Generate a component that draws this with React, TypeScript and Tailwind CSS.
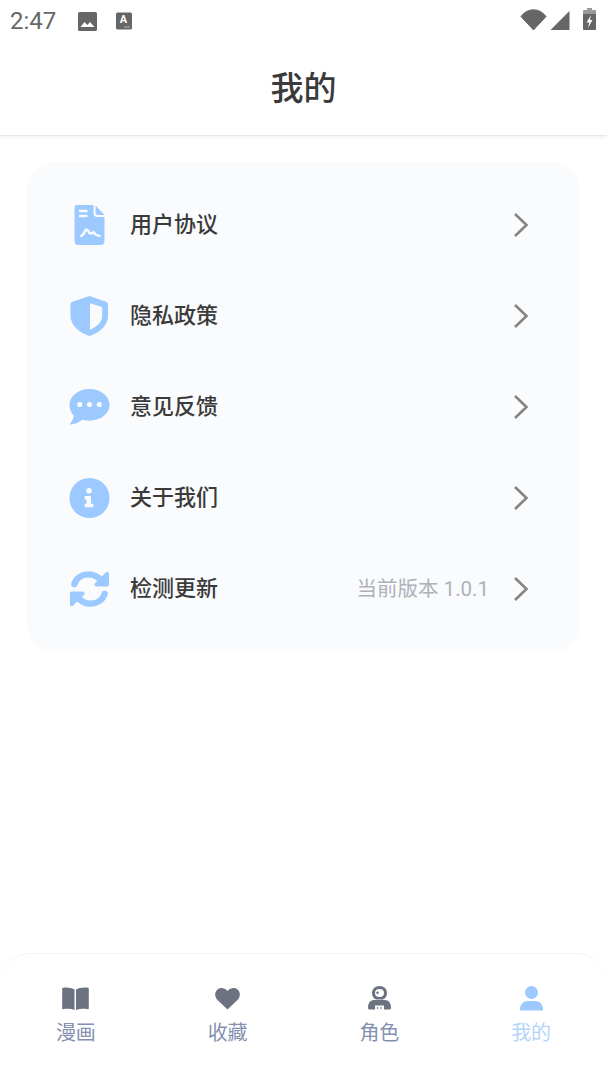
import type { ReactNode } from 'react'

const fontStack = { fontFamily: 'Roboto, "Noto Sans CJK SC", sans-serif' }

function Chevron() {
  return (
    <svg width="16" height="26" viewBox="0 0 16 26" className="shrink-0">
      <path d="M2 2 13.500 13 2 24" fill="none" stroke="#858585" strokeWidth="2.600" />
    </svg>
  )
}

function DocIcon() {
  return (
    <svg width="32" height="42" viewBox=".5 0 32 42">
      <path d="M3.500 1H20v8q0 4 4 4h7v24q0 4-4 4H4.500q-3.500 0-3.500-4V4q0-3 2.500-3Z" fill="#9cc9ff" />
      <path d="M22 1.500 31 11h-6q-3 0-3-3Z" fill="#9cc9ff" />
      <path d="M6.500 7h6.500M6.500 12h6.500" stroke="#f9fbfd" strokeWidth="2.400" strokeLinecap="round" />
      <path d="M7.500 32Q10 31 12 26q2-1 4 3 2 1.500 4-1 2 3.500 6 4" fill="none" stroke="#f9fbfd" strokeWidth="2.400" strokeLinecap="round" strokeLinejoin="round" />
    </svg>
  )
}

function ShieldIcon() {
  return (
    <svg width="42" height="42" viewBox="0 0 42 42">
      <path d="M21 .5 38 6.500c1 .4 2 1.500 2 3V21c0 9-8 17-19 20.500C10 38 1.500 30 1.500 21V9.500c0-1.500 1-2.600 2-3Z" fill="#9cc9ff" />
      <path d="M21.500 8 33 11.500c.6.200 1 .7 1 1.500v8c0 6-5 11-12.500 14Z" fill="#f9fbfd" />
    </svg>
  )
}

function ChatIcon() {
  return (
    <svg width="42" height="38" viewBox="0 0 42 38">
      <path d="M21 .5c11.500 0 20.500 7.300 20.500 16.300S32.500 33 21 33c-2.500 0-5-.4-7.300-1C10 34.500 6 36.500 2 37c-.8 0-1-.8-.6-1.300 1.500-1.700 3-4.700 3.600-7.700C2 25 .5 21 .5 16.800.5 7.800 9.500 .5 21 .5Z" fill="#9cc9ff" />
      <circle cx="11" cy="16.500" r="2.600" fill="#f9fbfd" />
      <circle cx="21" cy="16.500" r="2.600" fill="#f9fbfd" />
      <circle cx="31" cy="16.500" r="2.600" fill="#f9fbfd" />
    </svg>
  )
}

function InfoIcon() {
  return (
    <svg width="42" height="42" viewBox="0 0 42 42">
      <circle cx="21" cy="21" r="20.500" fill="#9cc9ff" />
      <circle cx="20.500" cy="13.500" r="2.800" fill="#f9fbfd" />
      <path d="M16 19h6.500v8H25v3.500h-9V27h2v-4.500h-2Z" fill="#f9fbfd" />
    </svg>
  )
}

function RefreshIcon() {
  return (
    <svg width="42" height="40" viewBox="0 0 42 40" fill="none">
      <path d="M5.500 15C7.500 8.500 13.500 5 20 5c5.500 0 10 2.500 14 7" stroke="#9cc9ff" strokeWidth="6.500" strokeLinecap="round" />
      <path d="M36.500 25c-2 6.500-8 10-14.500 10-5.500 0-10-2.500-14-7" stroke="#9cc9ff" strokeWidth="6.500" strokeLinecap="round" />
      <path d="M39 4.500v11H28Z" fill="#9cc9ff" stroke="#9cc9ff" strokeWidth="4" strokeLinejoin="round" />
      <path d="M3 35.500v-11H14Z" fill="#9cc9ff" stroke="#9cc9ff" strokeWidth="4" strokeLinejoin="round" />
    </svg>
  )
}

function BookIcon() {
  return (
    <svg width="29" height="23" viewBox="0 0 29 23" fill="#6d7280">
      <path d="M13.500 2.500C11 .8 6 0 2 .8c-.7.200-.8 .5-.8 1.200v19.500c0 .6.500 1 1 .8 4-.8 7.800-.5 11.300 .7Z" />
      <path d="M15 2.500C17.500 .8 23 0 27 .8c.6.200.8 .5 .8 1.200v19.500c0 .6-.5 1-1 .8-4-.8-8.300-.5-11.800 .7Z" />
    </svg>
  )
}

function HeartIcon() {
  return (
    <svg width="25" height="22" viewBox="0 0 25 22" fill="#6d7280">
      <path d="M12.500 21.500 2.500 12C-.5 9-.5 4.500 2 2c2.800-2.700 7-2.600 10.500 1C16 -.6 20.200 -.7 23 2c2.500 2.500 2.500 7-.5 10Z" />
    </svg>
  )
}

function RobotIcon() {
  return (
    <svg width="23" height="25" viewBox="0 0 23 25">
      <path d="M11.500 0C16 0 19 3 19 7c0 3-1.500 5.500-4 6.500H8C5.500 12.500 4 10 4 7c0-4 3-7 7.500-7Z" fill="#6d7280" />
      <path d="M11.500 3C14.500 3 16 4.500 16 7s-1.500 4-4.500 4S7 9.500 7 7s1.500-4 4.500-4Z" fill="#fff" />
      <path d="M8 6.800h3M9.500 5.300v3" stroke="#6d7280" strokeWidth="1" />
      <path d="M6 14h11c3.500 0 6 3 6 7.500 0 1-.5 2-1.500 2H16v-4H7v4H1.500C.5 23.500 0 22.500 0 21.500 0 17 2.500 14 6 14Z" fill="#6d7280" />
      <path d="M9.500 21v2M13 21v2" stroke="#6d7280" strokeWidth="1" />
    </svg>
  )
}

function UserIcon() {
  return (
    <svg width="23" height="25" viewBox="0 0 23 25" fill="#9cc9ff">
      <circle cx="11.500" cy="6.500" r="6.500" />
      <path d="M8 15h7c4.500 0 8 3.500 8 8 0 1-.5 1.500-1.500 1.500h-20C.5 24.500 0 24 0 23c0-4.500 3.500-8 8-8Z" />
    </svg>
  )
}

function StatusBar() {
  return (
    <div className="h-[42px] pl-[10px] pr-[11px] flex items-center text-[#666666]">
      <span className="text-[24px] leading-none" style={{ fontFamily: 'Roboto, sans-serif' }}>2:47</span>
      <svg width="19" height="19" viewBox="0 0 19 19" className="ml-[22px]">
        <rect width="19" height="19" rx="1.500" fill="#666666" />
        <path d="M2.500 15 6.500 10l3 3 2.500-3 4.500 5Z" fill="#fff" />
      </svg>
      <svg width="16" height="18" viewBox="0 0 16 18" className="ml-[19px]">
        <rect width="16" height="17" y=".5" rx="1.500" fill="#666666" />
        <text x="7.500" y="11" textAnchor="middle" fontSize="11" fontWeight="700" fill="#fff" fontFamily="Roboto, sans-serif">A</text>
        <path d="M8.500 15h5" stroke="#fff" strokeWidth="1" strokeDasharray="1 1" />
      </svg>
      <svg width="27" height="24" viewBox="0 0 27 24" className="ml-auto">
        <path d="M13.500 21 1 7.500C4.500 3 8.500 .8 13.500 .8s9 2.200 12.500 6.700Z" fill="#666666" stroke="#666666" strokeLinejoin="round" />
      </svg>
      <svg width="20" height="22" viewBox="0 0 20 22" className="ml-[3px]">
        <path d="M19.500 1v19H.5Z" fill="#666666" />
      </svg>
      <svg width="13" height="22" viewBox="0 0 13 22" className="ml-[13px] mb-[4px]">
        <path d="M4 0h5v2h3c.5 0 1 .5 1 1v3H0V3c0-.5.5-1 1-1h3Z" fill="#9a9a9a" />
        <path d="M0 6h13v15c0 .5-.5 1-1 1H1c-.5 0-1-.5-1-1Z" fill="#666666" />
        <path d="M8 7 3.500 14.500h2.800L5 20l4.500-8H6.800Z" fill="#fff" />
      </svg>
    </div>
  )
}

function MenuRow({ icon, label, extra }: { icon: ReactNode; label: string; extra?: string }) {
  return (
    <div className="h-[91.2px] flex items-center pl-[42px] pr-[51px]">
      <div className="w-[41px] flex justify-center shrink-0">{icon}</div>
      <span className="ml-[20px] text-[22px] leading-none font-medium text-[#3a3a3a]">{label}</span>
      {extra && <span className="ml-auto mr-[24px] text-[20.5px] leading-none text-[#aeb2b8]">{extra}</span>}
      <div className={extra ? '' : 'ml-auto'}><Chevron /></div>
    </div>
  )
}

function TabItem({ icon, label, active }: { icon: ReactNode; label: string; active?: boolean }) {
  return (
    <div className="flex-1 flex flex-col items-center">
      <div className="h-[25px] flex items-center justify-center">{icon}</div>
      <span className={`mt-[12px] text-[20px] leading-none ${active ? 'text-[#b3d5fb]' : 'text-[#8490b0]'}`}>{label}</span>
    </div>
  )
}

export default function App() {
  return (
    <div className="w-[607px] h-[1080px] bg-white flex flex-col overflow-hidden" style={fontStack}>
      <header className="h-[136px] border-b border-[#e4e6ea] shadow-[0_2px_3px_rgba(30,40,70,0.05)]">
        <StatusBar />
        <h1 className="mt-[25px] text-center text-[33px] leading-[44px] font-medium text-[#3a3a3a]">我的</h1>
      </header>

      <main className="flex-1 px-[27px] pt-[26px]">
        <div className="rounded-[28px] bg-[#f9fbfd] py-[17px]">
          <MenuRow icon={<DocIcon />} label="用户协议" />
          <MenuRow icon={<ShieldIcon />} label="隐私政策" />
          <MenuRow icon={<ChatIcon />} label="意见反馈" />
          <MenuRow icon={<InfoIcon />} label="关于我们" />
          <MenuRow icon={<RefreshIcon />} label="检测更新" extra="当前版本 1.0.1" />
        </div>
      </main>

      <nav className="h-[127px] rounded-t-[30px] border-t border-[#f4f4f6] bg-white flex pt-[32px]">
        <TabItem icon={<BookIcon />} label="漫画" />
        <TabItem icon={<HeartIcon />} label="收藏" />
        <TabItem icon={<RobotIcon />} label="角色" />
        <TabItem icon={<UserIcon />} label="我的" active />
      </nav>
    </div>
  )
}
